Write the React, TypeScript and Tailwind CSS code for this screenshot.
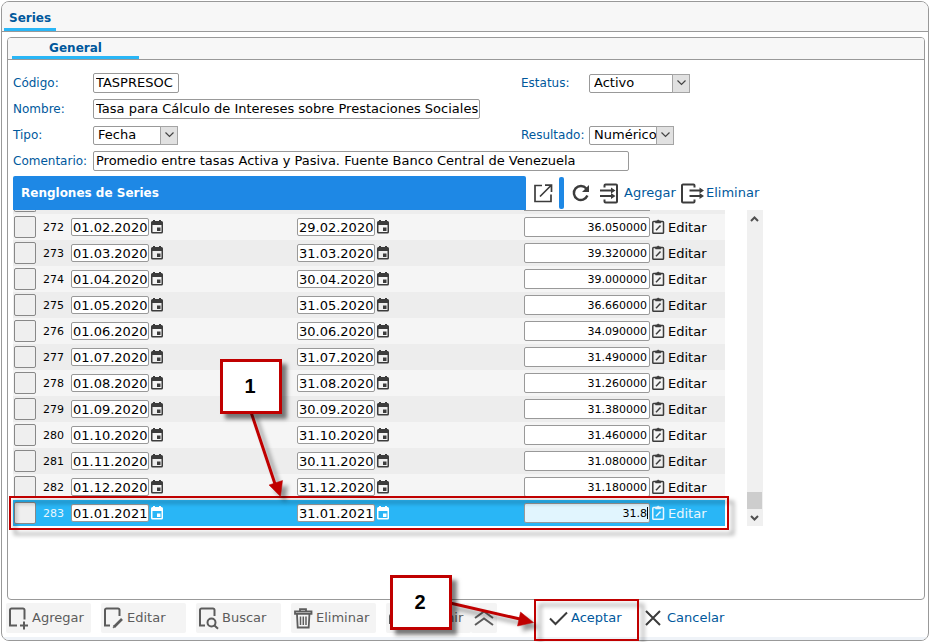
import React, { useState } from 'react';

interface Renglon {
    id: number;
    desde: string;
    hasta: string;
    valor: string;
}

const rows: Renglon[] = [
    { id: 272, desde: '01.02.2020', hasta: '29.02.2020', valor: '36.050000' },
    { id: 273, desde: '01.03.2020', hasta: '31.03.2020', valor: '39.320000' },
    { id: 274, desde: '01.04.2020', hasta: '30.04.2020', valor: '39.000000' },
    { id: 275, desde: '01.05.2020', hasta: '31.05.2020', valor: '36.660000' },
    { id: 276, desde: '01.06.2020', hasta: '30.06.2020', valor: '34.090000' },
    { id: 277, desde: '01.07.2020', hasta: '31.07.2020', valor: '31.490000' },
    { id: 278, desde: '01.08.2020', hasta: '31.08.2020', valor: '31.260000' },
    { id: 279, desde: '01.09.2020', hasta: '30.09.2020', valor: '31.380000' },
    { id: 280, desde: '01.10.2020', hasta: '31.10.2020', valor: '31.460000' },
    { id: 281, desde: '01.11.2020', hasta: '30.11.2020', valor: '31.080000' },
    { id: 282, desde: '01.12.2020', hasta: '31.12.2020', valor: '31.180000' },
    { id: 283, desde: '01.01.2021', hasta: '31.01.2021', valor: '31.8' },
];

const CalendarIcon = () => (
    <svg width="12" height="14" viewBox="0 0 12 14" fill="currentColor">
        <path fillRule="evenodd" d="M1.500 1H2V0h2v1h4V0h2v1h.5A1.500 1.500 0 0 1 12 2.500v9.500A1.500 1.500 0 0 1 10.500 13.500h-9A1.500 1.500 0 0 1 0 12V2.500A1.500 1.500 0 0 1 1.500 1zM1.500 5v7h9V5z" />
        <path d="M6 7.500h3.500V11H6z" />
    </svg>
);

const ClipboardIcon = () => (
    <svg width="13" height="16" viewBox="0 0 13 16" fill="none" stroke="currentColor" strokeWidth="1.500">
        <rect x="0.800" y="2.600" width="10.700" height="11.600" rx="0.800" />
        <path d="M3.500 4V2h1.300a1.500 1.500 0 0 1 2.800 0h1.300v2z" fill="currentColor" strokeWidth="0.500" />
        <path d="M4 11.300L8.500 6.500" />
    </svg>
);

const OpenIcon = () => (
    <svg width="19" height="19" viewBox="0 0 19 19" fill="none" stroke="#3c3c3c" strokeWidth="1.700">
        <path d="M8 1.500H1v16h16v-7" />
        <path d="M6 12.500L17 1.500M11 1.200h6.500V8" />
    </svg>
);

const RefreshIcon = () => (
    <svg width="18" height="18" viewBox="0 0 18 18" fill="none" stroke="#3c3c3c" strokeWidth="2.400">
        <path d="M14.300 4.500A7 7 0 1 0 15.400 11.500" />
        <path d="M17 1v7h-7z" fill="#3c3c3c" stroke="none" />
    </svg>
);

const InsertIcon = () => (
    <svg width="19" height="21" viewBox="0 0 19 21" fill="none" stroke="#3c3c3c" strokeWidth="2">
        <path d="M4.500 4.500V2.500a1 1 0 0 1 1-1H16a1 1 0 0 1 1 1v16a1 1 0 0 1-1 1H5.500a1 1 0 0 1-1-1V16.500" />
        <path d="M0 7.500h13M0 13h13" />
        <path d="M11 4.500l4.500 3-4.500 3zM11 10l4.500 3-4.500 3z" fill="#3c3c3c" stroke="none" />
    </svg>
);

const RemoveIcon = () => (
    <svg width="23" height="21" viewBox="0 0 23 21" fill="none" stroke="#3c3c3c" strokeWidth="2">
        <path d="M13.500 4.500V2.500a1 1 0 0 0-1-1H2a1 1 0 0 0-1 1v16a1 1 0 0 0 1 1h10.500a1 1 0 0 0 1-1V16.500" />
        <path d="M8.500 7.500h12M8.500 13h12" />
        <path d="M18.500 4.500l4.500 3-4.500 3zM18.500 10l4.500 3-4.500 3z" fill="#3c3c3c" stroke="none" />
    </svg>
);

const AddPageIcon = () => (
    <svg width="20" height="23" viewBox="0 0 20 23" fill="none" stroke="currentColor" strokeWidth="2">
        <path d="M15.500 12.500V3a1.500 1.500 0 0 0-1.500-1.500H2.500A1.500 1.500 0 0 0 1 3v15.500h7" />
        <path d="M11 18.500h8M15 14.500v8" />
    </svg>
);

const EditPageIcon = () => (
    <svg width="20" height="23" viewBox="0 0 20 23" fill="none" stroke="currentColor" strokeWidth="2">
        <path d="M15.500 9V3a1.500 1.500 0 0 0-1.500-1.500H2.500A1.500 1.500 0 0 0 1 3v15.500h5" />
        <path d="M10.500 19.500l7.500-7.500" strokeWidth="2.600" />
        <path d="M9 21l.8-3 2 2z" fill="currentColor" strokeWidth="0.500" />
    </svg>
);

const SearchPageIcon = () => (
    <svg width="20" height="23" viewBox="0 0 20 23" fill="none" stroke="currentColor" strokeWidth="2">
        <path d="M15.500 9V3a1.500 1.500 0 0 0-1.500-1.500H2.500A1.500 1.500 0 0 0 1 3v15.500h5" />
        <circle cx="12.500" cy="15.500" r="4" />
        <path d="M15.500 18.500l3.500 3.200" />
    </svg>
);

const TrashIcon = () => (
    <svg width="19" height="21" viewBox="0 0 19 21" fill="none" stroke="currentColor" strokeWidth="1.800">
        <path d="M6 3V1.200h6V3M1 3.500h16.500v2.300H1zM3 6.500l.7 13h11l.7-13" />
        <path d="M6.500 8.500v8.500M9.300 8.500v8.500M12 8.500v8.500" strokeWidth="1.500" />
    </svg>
);

const PrintIcon = () => (
    <svg width="16" height="17" viewBox="0 0 16 17" fill="none" stroke="currentColor" strokeWidth="2">
        <path d="M4 5V1h8v4M4 13H1V6a1 1 0 0 1 1-1h12a1 1 0 0 1 1 1v7h-3" />
        <path d="M4 10h8v6H4z" />
    </svg>
);

const Label = ({ htmlFor, className, children }: { htmlFor: string; className: string; children: React.ReactNode }) => (
    <label htmlFor={htmlFor} className={`shrink-0 whitespace-nowrap text-xs text-[#00589c] ${className}`}>
        {children}
    </label>
);

const SelectBox = ({ id, className, options }: { id: string; className: string; options: string[] }) => (
    <span className={`relative h-[19px] ${className}`}>
        <select
            id={id}
            className="block h-full w-full appearance-none rounded-xs border border-[#999] bg-white pl-1 text-[13px] leading-4 text-black"
        >
            {options.map((option) => (
                <option key={option}>{option}</option>
            ))}
        </select>
        <span className="pointer-events-none absolute inset-y-0 right-0 flex w-[18px] items-center justify-center border border-[#a4a4a4] bg-[#e1e1e1]">
            <svg width="9" height="6" viewBox="0 0 9 6" fill="none" stroke="#444" strokeWidth="1.200">
                <path d="M0.500 0.500l4 4 4-4" />
            </svg>
        </span>
    </span>
);

const DateField = ({ label, value, active }: { label: string; value: string; active: boolean }) => (
    <div className="flex items-center gap-0.5">
        <input
            type="text"
            aria-label={label}
            defaultValue={value}
            className="h-[18px] w-[78px] rounded-xs border border-[#999] bg-white pt-px pl-px text-[13px] text-black"
        />
        <button type="button" aria-label={`Calendario ${label}`} className={active ? 'text-white' : 'text-[#3c3c3c]'}>
            <CalendarIcon />
        </button>
    </div>
);

const FooterButton = ({ icon, text }: { icon: React.ReactNode; text: string }) => (
    <button
        type="button"
        className="flex h-[30px] w-[85px] shrink-0 items-center gap-[3px] rounded-xs bg-[#f4f4f4] pl-[3px] text-[13px] text-[#5c5c5c]"
    >
        {icon}
        {text}
    </button>
);

const Callout = ({ className, children }: { className: string; children: React.ReactNode }) => (
    <div
        className={`absolute flex h-[55px] w-[62px] items-center justify-center border-3 border-[#c00000] bg-white pr-0.5 pb-0.5 font-['Liberation_Sans',Arial,sans-serif] text-xl font-bold text-black shadow-[5px_5px_4px_rgba(0,0,0,0.5)] ${className}`}
    >
        {children}
    </div>
);

const App: React.FC = () => {
    const [selected, setSelected] = useState<number>(283);

    return (
        <div className="relative bg-white p-px font-['DejaVu_Sans',Verdana,sans-serif] text-[13px] text-black">
            <main className="overflow-hidden rounded-lg border border-[#999] bg-white">
                <header className="flex h-[30px] items-end border-b border-[#999] bg-[#f7f7f7] pl-0.5">
                    <h1 className="h-[21px] w-[52px] border-b-3 border-[#29b6f6] pl-[5px] text-xs leading-4 font-bold text-[#00589c]">Series</h1>
                </header>

                <section className="mt-[5px] mr-[3px] ml-[5px] overflow-hidden rounded border border-[#999]">
                    <nav className="flex h-[22px] items-end border-b border-[#999] bg-[#f7f7f7] pl-1">
                        <button
                            type="button"
                            className="h-[19px] w-[127px] border-b-3 border-[#29b6f6] text-xs leading-4 font-bold text-[#00589c]"
                        >
                            General
                        </button>
                    </nav>

                    <div className="pt-[13px] pb-[73px] pl-[5px]">
                        <form className="flex flex-col gap-1.5">
                            <div className="flex h-5 items-center">
                                <div className="flex w-[508px] items-center">
                                    <Label htmlFor="codigo" className="w-20">Código:</Label>
                                    <input
                                        id="codigo"
                                        defaultValue="TASPRESOC"
                                        className="h-5 w-[86px] rounded-xs border border-[#999] pb-px pl-0.5"
                                    />
                                </div>
                                <Label htmlFor="estatus" className="w-[68px]">Estatus:</Label>
                                <SelectBox id="estatus" className="w-[101px]" options={['Activo', 'Inactivo']} />
                            </div>
                            <div className="flex h-5 items-center">
                                <Label htmlFor="nombre" className="w-20">Nombre:</Label>
                                <input
                                    id="nombre"
                                    defaultValue="Tasa para Cálculo de Intereses sobre Prestaciones Sociales"
                                    className="h-5 w-[387px] rounded-xs border border-[#999] pb-px pl-0.5"
                                />
                            </div>
                            <div className="flex h-5 items-center">
                                <div className="flex w-[508px] items-center">
                                    <Label htmlFor="tipo" className="w-20">Tipo:</Label>
                                    <SelectBox id="tipo" className="w-[85px]" options={['Fecha', 'Valor']} />
                                </div>
                                <Label htmlFor="resultado" className="w-[68px]">Resultado:</Label>
                                <SelectBox id="resultado" className="w-[85px]" options={['Numérico', 'Texto']} />
                            </div>
                            <div className="flex h-5 items-center">
                                <Label htmlFor="comentario" className="w-20">Comentario:</Label>
                                <input
                                    id="comentario"
                                    defaultValue="Promedio entre tasas Activa y Pasiva. Fuente Banco Central de Venezuela"
                                    className="h-5 w-[536px] rounded-xs border border-[#999] pb-px pl-0.5"
                                />
                            </div>
                        </form>

                        <div className="mt-[5px] flex h-[34px] items-center text-[#00589c]">
                            <h2 className="flex h-full w-[513px] items-center rounded-t-xs bg-[#1e88e5] pl-2 text-xs font-bold text-white">
                                Renglones de Series
                            </h2>
                            <button type="button" aria-label="Abrir" className="ml-2">
                                <OpenIcon />
                            </button>
                            <span className="ml-1.5 h-8 w-[5px] rounded-xs bg-[#1e88e5]" />
                            <button type="button" aria-label="Refrescar" className="ml-2">
                                <RefreshIcon />
                            </button>
                            <button type="button" className="ml-2.5 flex w-[81px] items-center gap-[5px]">
                                <InsertIcon />
                                Agregar
                            </button>
                            <button type="button" className="flex items-center gap-0.5">
                                <RemoveIcon />
                                Eliminar
                            </button>
                        </div>

                        <div className="flex h-[316px]">
                            <div>
                                {/* lower edge of the row that is scrolled out of view */}
                                <div className="flex h-1 w-[712px] items-start bg-[#ededed] pl-px">
                                    <span className="h-0.5 w-[22px] rounded-b-xs border border-t-0 border-[#888]" />
                                    <span className="ml-[488px] h-px w-[126px] bg-[#999]" />
                                </div>
                                <table className="w-[712px] table-fixed border-collapse">
                                    <colgroup>
                                        <col className="w-[26px]" />
                                        <col className="w-8" />
                                        <col className="w-[226px]" />
                                        <col className="w-[227px]" />
                                        <col />
                                    </colgroup>
                                    <tbody>
                                        {rows.map((row) => {
                                            const active = row.id === selected;
                                            return (
                                                <tr
                                                    key={row.id}
                                                    onClick={() => setSelected(row.id)}
                                                    className={`h-[26px] ${active ? 'bg-[#29b6f6] text-[#eaf6fd]' : 'odd:bg-[#f5f5f5] even:bg-[#ededed]'}`}
                                                >
                                                    <td className="p-0 pl-px">
                                                        <input
                                                            type="checkbox"
                                                            aria-label={`Seleccionar ${row.id}`}
                                                            className="block size-[22px] appearance-none rounded-xs border border-[#888] bg-[#efefef]"
                                                        />
                                                    </td>
                                                    <td className="p-0 pt-0.5 pl-1 text-[11px]">{row.id}</td>
                                                    <td className="p-0">
                                                        <DateField label={`Desde ${row.id}`} value={row.desde} active={active} />
                                                    </td>
                                                    <td className="p-0">
                                                        <DateField label={`Hasta ${row.id}`} value={row.hasta} active={active} />
                                                    </td>
                                                    <td className="p-0">
                                                        <div className="relative flex items-center gap-0.5">
                                                            <input
                                                                type="text"
                                                                aria-label={`Valor ${row.id}`}
                                                                defaultValue={row.valor}
                                                                className={`h-5 w-[126px] rounded-xs border border-[#999] pr-0.5 text-right text-[11px] text-black ${active ? 'bg-[#e1f5fe]' : 'bg-white'}`}
                                                            />
                                                            {active && <span className="absolute top-1 left-[123px] h-3 w-px bg-black" />}
                                                            <button type="button" className="flex items-center gap-[3px]">
                                                                <span className={active ? 'text-[#eaf6fd]' : 'text-[#3c3c3c]'}>
                                                                    <ClipboardIcon />
                                                                </span>
                                                                <span className="pt-px leading-4">Editar</span>
                                                            </button>
                                                        </div>
                                                    </td>
                                                </tr>
                                            );
                                        })}
                                    </tbody>
                                </table>
                            </div>
                            <div className="ml-[22px] flex w-4 flex-col bg-[#f0f0f0]">
                                <svg width="16" height="17" viewBox="0 0 16 17" fill="none" stroke="#505050" strokeWidth="2">
                                    <path d="M4 11l3.500-3.500L11 11" />
                                </svg>
                                <div className="mt-auto h-[17px] w-[15px] bg-[#cdcdcd]" />
                                <svg width="16" height="17" viewBox="0 0 16 17" fill="none" stroke="#505050" strokeWidth="2">
                                    <path d="M4 7l3.500 3.500L11 7" />
                                </svg>
                            </div>
                        </div>
                    </div>
                </section>

                <footer className="flex h-10 items-start border-b-3 border-[#eff3f8] pt-[3px] pl-1">
                    <div className="flex gap-2.5">
                        <FooterButton icon={<AddPageIcon />} text="Agregar" />
                        <FooterButton icon={<EditPageIcon />} text="Editar" />
                        <FooterButton icon={<SearchPageIcon />} text="Buscar" />
                        <FooterButton icon={<TrashIcon />} text="Eliminar" />
                        <FooterButton icon={<PrintIcon />} text="Imprimir" />
                    </div>
                    <button
                        type="button"
                        aria-label="Subir"
                        className="flex h-[30px] w-[26px] items-center justify-center rounded-xs bg-[#f4f4f4]"
                    >
                        <svg width="20" height="16" viewBox="0 0 20 16" fill="none" stroke="#5c5c5c" strokeWidth="2">
                            <path d="M1 8l9-6.500L19 8M1 15l9-6.500 9 6.500" />
                        </svg>
                    </button>
                    <button type="button" className="ml-[52px] flex h-[30px] w-24 items-center gap-[3px] text-[#00589c]">
                        <svg width="19" height="15" viewBox="0 0 19 15" fill="none" stroke="#3c3c3c" strokeWidth="2">
                            <path d="M1 7.500l5.500 5.500L18 1.500" />
                        </svg>
                        Aceptar
                    </button>
                    <button type="button" className="flex h-[30px] items-center gap-1.5 text-[#00589c]">
                        <svg width="16" height="16" viewBox="0 0 16 16" fill="none" stroke="#3c3c3c" strokeWidth="2">
                            <path d="M1 1l14 14M15 1L1 15" />
                        </svg>
                        Cancelar
                    </button>
                </footer>
            </main>

            {/* step markers drawn over the form */}
            <div className="pointer-events-none absolute top-[496px] left-[9px] h-[34px] w-[720px] border-2 border-[#c00000] drop-shadow-[5px_5px_2px_rgba(0,0,0,0.4)]" />
            <div className="pointer-events-none absolute top-[599px] left-[534px] h-[42px] w-[105px] border-2 border-[#c00000] drop-shadow-[5px_5px_2px_rgba(0,0,0,0.4)]" />
            <svg
                width="560"
                height="640"
                viewBox="0 0 560 640"
                className="pointer-events-none absolute top-0 left-0 drop-shadow-[5px_5px_2px_rgba(0,0,0,0.4)]"
            >
                <g fill="#c00000" stroke="#c00000">
                    <path d="M251 412L275 484" strokeWidth="3" />
                    <path d="M280.500 496.500L269 485l13.500-4.500z" strokeWidth="0.500" />
                    <path d="M450 603L520 619" strokeWidth="3" />
                    <path d="M533.500 622.500L517.500 626l3-14z" strokeWidth="0.500" />
                </g>
            </svg>
            <Callout className="top-[359px] left-[220px]">1</Callout>
            <Callout className="top-[575px] left-[390px]">2</Callout>
        </div>
    );
};

export default App;
